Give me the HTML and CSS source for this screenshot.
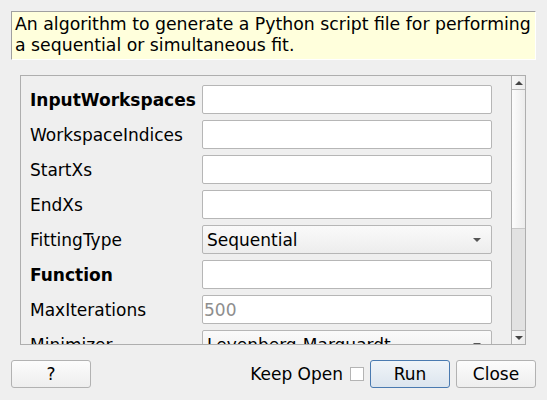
FILE: index.html
```html
<!DOCTYPE html>
<html>
<head>
<meta charset="utf-8">
<link rel="stylesheet" href="styles.css">
</head>
<body>
<div class="dialog">
  <div class="desc">An algorithm to generate a Python script file for performing a sequential or simultaneous fit.</div>
  <div class="frame">
    <div class="content">
      <div class="grid">
        <div class="label bold">InputWorkspaces</div>
        <div class="input"></div>
        <div class="label">WorkspaceIndices</div>
        <div class="input"></div>
        <div class="label">StartXs</div>
        <div class="input"></div>
        <div class="label">EndXs</div>
        <div class="input"></div>
        <div class="label">FittingType</div>
        <div class="combo"><span>Sequential</span><span class="caret"></span></div>
        <div class="label bold">Function</div>
        <div class="input"></div>
        <div class="label">MaxIterations</div>
        <div class="input placeholder">500</div>
        <div class="label">Minimizer</div>
        <div class="combo"><span>Levenberg-Marquardt</span><span class="caret"></span></div>
      </div>
    </div>
    <div class="scrollbar">
      <div class="sb-btn"><span class="tri-up"></span></div>
      <div class="sb-thumb"></div>
      <div class="sb-track"></div>
      <div class="sb-btn"><span class="tri-down"></span></div>
    </div>
  </div>
  <div class="buttons">
    <button class="btn">?</button>
    <div class="spacer"></div>
    <span class="keep">Keep Open</span>
    <span class="check"></span>
    <button class="btn default">Run</button>
    <button class="btn">Close</button>
  </div>
</div>
</body>
</html>
```

FILE: styles.css
```css
html, body {
  margin: 0;
  padding: 0;
  background: #efefef;
}
body {
  font-family: "DejaVu Sans", sans-serif;
  font-size: 17px;
  color: #000;
  width: 547px;
  height: 400px;
  overflow: hidden;
}
.dialog {
  display: flex;
  flex-direction: column;
  padding: 11px 11px 0 11px;
}
.desc {
  background: #ffffdc;
  border-top: 1px solid #a0a0a0;
  border-left: 1px solid #a0a0a0;
  border-right: 1px solid #ffffff;
  border-bottom: 1px solid #ffffff;
  height: 45px;
  padding: 2px 0 0 3px;
  font-size: 17.3px;
  line-height: 21px;
  box-sizing: content-box;
}
.frame {
  margin: 15px 10px 0 9px;
  height: 268px;
  border: 1px solid #aeaeae;
  display: flex;
  overflow: hidden;
}
.content {
  flex: 1;
  overflow: hidden;
  padding: 9px 0 0 9px;
}
.grid {
  display: grid;
  grid-template-columns: 172px 290px;
  grid-auto-rows: 29px;
  row-gap: 6px;
  align-items: center;
}
.label {
  white-space: nowrap;
}
.bold {
  font-weight: bold;
}
.input, .combo {
  box-sizing: border-box;
  height: 29px;
  border: 1px solid #b6b6b6;
  border-radius: 2px;
  background: #fff;
  display: flex;
  align-items: center;
  padding-left: 3px;
}
.placeholder {
  color: #8e8e8e;
  padding-left: 1px;
}
.combo {
  background: linear-gradient(#fafafa, #ededed);
  justify-content: space-between;
  padding: 0 10px 0 4px;
}
.caret {
  width: 0;
  height: 0;
  border-left: 4px solid transparent;
  border-right: 4px solid transparent;
  border-top: 4px solid #555;
}
.scrollbar {
  width: 13px;
  border-left: 1px solid #b0b0b0;
  display: flex;
  flex-direction: column;
}
.sb-btn {
  height: 13px;
  background: linear-gradient(90deg, #f6f6f6, #ececec);
  display: flex;
  align-items: center;
  justify-content: center;
}
.sb-btn:first-child {
  border-bottom: 1px solid #b8b8b8;
}
.sb-btn:last-child {
  border-top: 1px solid #b8b8b8;
}
.tri-up {
  width: 0;
  height: 0;
  border-left: 4px solid transparent;
  border-right: 4px solid transparent;
  border-bottom: 4px solid #444;
}
.tri-down {
  width: 0;
  height: 0;
  border-left: 4px solid transparent;
  border-right: 4px solid transparent;
  border-top: 4px solid #444;
}
.sb-thumb {
  height: 138px;
  background: linear-gradient(90deg, #fcfcfc, #ececec);
  border-bottom: 1px solid #c8c8c8;
}
.sb-track {
  flex: 1;
  background: #e2e2e2;
}
.buttons {
  display: flex;
  align-items: center;
  margin-top: 15px;
  height: 28px;
}
.spacer {
  flex: 1;
}
.btn {
  font-family: "DejaVu Sans", sans-serif;
  font-size: 17px;
  width: 80px;
  height: 28px;
  box-sizing: border-box;
  border: 1px solid #b2b2b2;
  border-radius: 3px;
  background: linear-gradient(#fcfcfc, #eeeeee);
  color: #000;
  padding: 0;
  margin: 0;
}
.btn.default {
  border-color: #4a7ab0;
  background: linear-gradient(#f0f4f8, #dce5ee);
  margin-left: 6px;
  margin-right: 6px;
}
.keep {
  margin-right: 7px;
}
.check {
  width: 12px;
  height: 12px;
  border: 1px solid #b4b4b4;
  background: #fff;
}
```
